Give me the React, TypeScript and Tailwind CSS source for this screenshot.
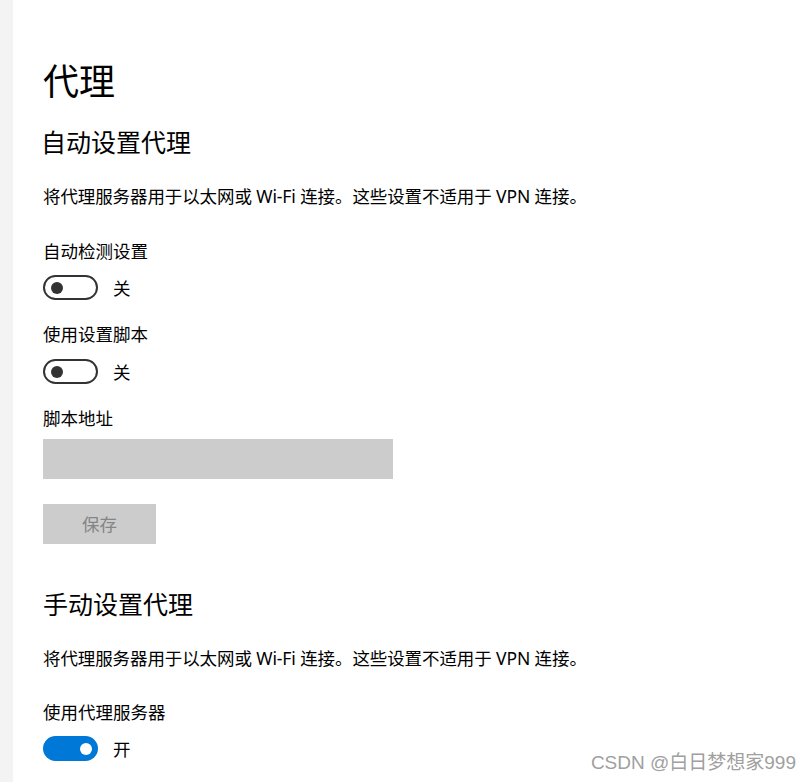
import React from 'react';

const FONT = "font-['Segoe_UI','Noto_Sans','Noto_Sans_CJK_SC',sans-serif]";

function Toggle({ on, className }: { on: boolean; className?: string }) {
  return (
    <div className={`flex items-center gap-[15px] ${className ?? ''}`}>
      {on ? (
        <div className="flex h-[25px] w-[55px] items-center justify-end rounded-full bg-[#0078d7] pr-[6px]">
          <div className="h-[12px] w-[12px] rounded-full bg-white" />
        </div>
      ) : (
        <div className="flex h-[25px] w-[55px] items-center rounded-full border-2 border-[#333333] pl-[6px]">
          <div className="h-[12px] w-[12px] rounded-full bg-[#333333]" />
        </div>
      )}
      <span className="text-[17.5px] leading-[18px] text-black">{on ? '开' : '关'}</span>
    </div>
  );
}

export default function App() {
  const desc = '将代理服务器用于以太网或 Wi-Fi 连接。这些设置不适用于 VPN 连接。';

  return (
    <div className={`relative flex h-[782px] w-[811px] overflow-hidden bg-white ${FONT}`}>
      <div className="w-[13px] shrink-0 bg-[#f3f3f3]" />
      <main className="flex flex-col items-start pl-[30px] text-black">
        <h1 className="mt-[64px] text-[36px] leading-[36px] font-normal">代理</h1>

        <h2 className="-ml-[2px] mt-[30px] text-[25px] leading-[25px] font-normal">自动设置代理</h2>
        <p className="mt-[32px] text-[17.5px] leading-[18px] tracking-[-0.1px]">{desc}</p>

        <div className="mt-[37px] text-[17.5px] leading-[18px]">自动检测设置</div>
        <Toggle on={false} className="mt-[15px]" />

        <div className="mt-[25px] text-[17.5px] leading-[18px]">使用设置脚本</div>
        <Toggle on={false} className="mt-[16px]" />

        <div className="mt-[25px] text-[17.5px] leading-[18px]">脚本地址</div>
        <div className="mt-[12px] h-[40px] w-[350px] bg-[#cccccc]" />

        <button className="mt-[25px] flex h-[40px] w-[113px] items-center justify-center bg-[#cccccc] text-[17.5px] text-[#858585]">
          保存
        </button>

        <h2 className="mt-[48px] text-[25px] leading-[25px] font-normal">手动设置代理</h2>
        <p className="mt-[32px] text-[17.5px] leading-[18px] tracking-[-0.1px]">{desc}</p>

        <div className="mt-[36px] text-[17.5px] leading-[18px]">使用代理服务器</div>
        <Toggle on className="mt-[15px]" />
      </main>

      <div className="absolute bottom-[8px] right-[15px] font-['Liberation_Sans','Noto_Sans_CJK_SC',sans-serif] text-[19px] leading-[22px] text-[#a0a0a0] [text-shadow:0_0_1px_#fff]">
        CSDN @白日梦想家999
      </div>
    </div>
  );
}
